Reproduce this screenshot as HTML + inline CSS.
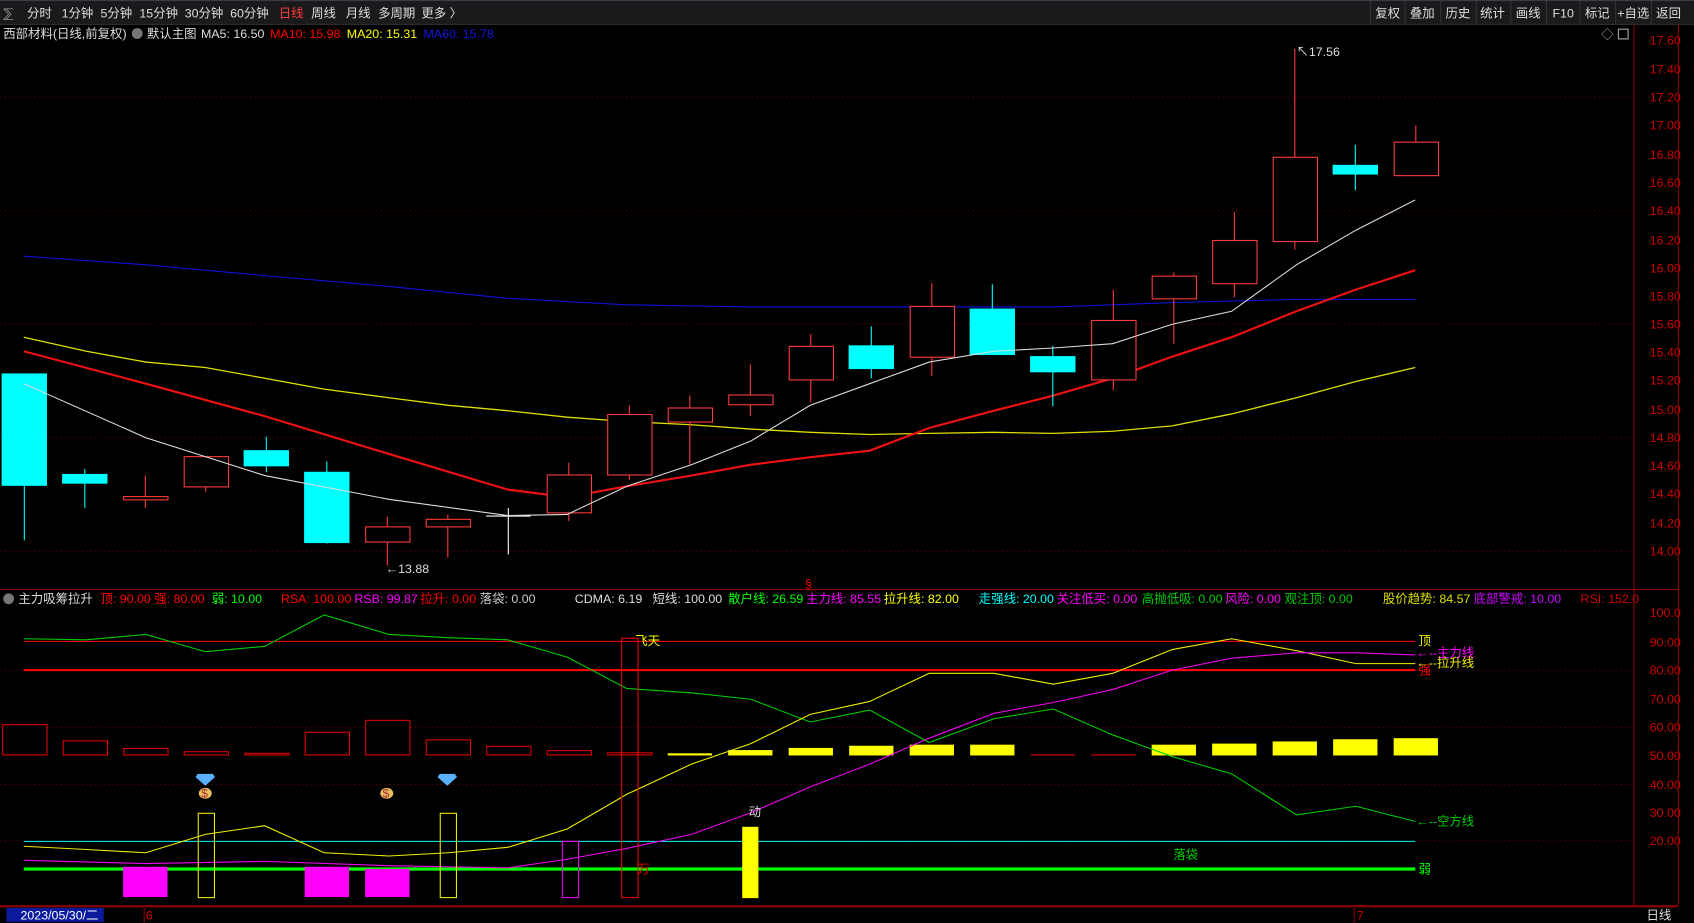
<!DOCTYPE html>
<html><head><meta charset="utf-8"><style>
html,body{margin:0;padding:0;background:#000;overflow:hidden}
svg{display:block}
text{font-family:"Liberation Sans","Noto Sans CJK SC",sans-serif;font-size:11.5px}
</style></head><body>
<svg width="1694" height="923" viewBox="0 0 1568 854" preserveAspectRatio="none">
<rect width="1568" height="854" fill="#000"/>
<!-- top toolbar -->
<rect x="0" y="0" width="1568" height="22" fill="#1a1a1c"/>
<line x1="0" y1="0.5" x2="1568" y2="0.5" stroke="#3a3d44"/>
<line x1="0" y1="22.5" x2="1568" y2="22.5" stroke="#333"/>
<g fill="#ddd">
<text x="3" y="16" fill="#aaa">⅀</text>
<text x="25" y="16">分时</text><text x="57" y="16">1分钟</text><text x="93" y="16">5分钟</text><text x="129" y="16">15分钟</text><text x="171" y="16">30分钟</text><text x="213" y="16">60分钟</text>
<text x="258" y="16" fill="#ff3b3b">日线</text><text x="288" y="16">周线</text><text x="320" y="16">月线</text><text x="350" y="16">多周期</text><text x="390" y="16">更多 〉</text>
<text x="1273" y="16">复权</text><text x="1305" y="16">叠加</text><text x="1338" y="16">历史</text><text x="1370" y="16">统计</text><text x="1403" y="16">画线</text><text x="1437" y="16">F10</text><text x="1467" y="16">标记</text><text x="1497" y="16">+自选</text><text x="1533" y="16">返回</text>
</g>
<g stroke="#333"><line x1="1268.5" y1="1" x2="1268.5" y2="22"/><line x1="1300.5" y1="1" x2="1300.5" y2="22"/><line x1="1333.5" y1="1" x2="1333.5" y2="22"/><line x1="1366.5" y1="1" x2="1366.5" y2="22"/><line x1="1398.5" y1="1" x2="1398.5" y2="22"/><line x1="1431.5" y1="1" x2="1431.5" y2="22"/><line x1="1462.5" y1="1" x2="1462.5" y2="22"/><line x1="1495.5" y1="1" x2="1495.5" y2="22"/><line x1="1528.5" y1="1" x2="1528.5" y2="22"/></g>
<!-- legend -->
<text x="3" y="35" fill="#ddd">西部材料(日线,前复权)</text>
<circle cx="127" cy="31" r="5" fill="#777"/>
<text x="136" y="35" fill="#ddd">默认主图</text>
<text x="186" y="35" fill="#ddd">MA5: 16.50</text>
<text x="250" y="35" fill="#f00">MA10: 15.98</text>
<text x="321" y="35" fill="#ff0">MA20: 15.31</text>
<text x="392" y="35" fill="#1515dd">MA60: 15.78</text>
<text x="1482" y="36" fill="#aaa">◇</text>
<rect x="1498" y="27" width="9" height="9" fill="none" stroke="#aaa"/>
<!-- right axis -->
<line x1="1512.5" y1="23" x2="1512.5" y2="838" stroke="#800"/>
<line x1="1553.5" y1="23" x2="1553.5" y2="838" stroke="#800"/>
<g fill="#c00" font-size="11">
<text x="1527" y="41">17.60</text><text x="1527" y="68">17.40</text><text x="1527" y="94">17.20</text><text x="1527" y="120">17.00</text><text x="1527" y="147">16.80</text><text x="1527" y="173">16.60</text><text x="1527" y="199">16.40</text><text x="1527" y="252">16.00</text><text x="1527" y="278">15.80</text><text x="1527" y="304">15.60</text><text x="1527" y="330">15.40</text><text x="1527" y="356">15.20</text><text x="1527" y="383">15.00</text><text x="1527" y="409">14.80</text><text x="1527" y="435">14.60</text><text x="1527" y="461">14.40</text><text x="1527" y="488">14.20</text><text x="1527" y="514">14.00</text><text x="1527" y="226">16.20</text>
<text x="1527" y="571">100.0</text><text x="1527" y="598">90.00</text><text x="1527" y="624">80.00</text><text x="1527" y="651">70.00</text><text x="1527" y="677">60.00</text><text x="1527" y="703">50.00</text><text x="1527" y="730">40.00</text><text x="1527" y="756">30.00</text><text x="1527" y="782">20.00</text>
</g>
<g stroke="#600" stroke-dasharray="1,3">
<line x1="0" y1="90" x2="1512" y2="90"/><line x1="0" y1="195" x2="1512" y2="195"/><line x1="0" y1="300" x2="1512" y2="300"/><line x1="0" y1="405" x2="1512" y2="405"/><line x1="0" y1="510" x2="1512" y2="510"/>
<line x1="0" y1="620" x2="1512" y2="620"/><line x1="0" y1="673" x2="1512" y2="673"/><line x1="0" y1="726" x2="1512" y2="726"/><line x1="0" y1="778" x2="1512" y2="778"/>
</g>
<!-- separator -->
<line x1="0" y1="545.5" x2="1553" y2="545.5" stroke="#800"/>
<text x="745" y="544" fill="#f00" font-size="11">§</text>
<!-- MA lines -->
<polyline fill="none" stroke="#1010dd" stroke-width="1" points="22,237 135,245 245,255 360,265 470,276 580,282 695,284 860,284 975,284 1085,280 1200,277 1310,277"/>
<polyline fill="none" stroke="#dddd00" stroke-width="1.2" points="22,312 80,325 135,335 190,340 245,350 300,360 360,368 415,375 470,380 525,386 580,390 640,393 695,397 750,400 805,402 860,401 920,400 975,401 1030,399 1085,394 1140,383 1200,368 1255,353 1310,340"/>
<polyline fill="none" stroke="#ee1111" stroke-width="2" points="22,325 135,355 245,385 360,420 470,453 525,460 580,450 640,440 695,430 750,423 805,417 860,396 920,380 975,366 1030,350 1085,330 1140,312 1200,288 1255,268 1310,250"/>
<!-- candles -->
<g stroke="#ff3b3b" fill="#000">
<line x1="134.5" y1="440" x2="134.5" y2="470"/><rect x="114.5" y="459.5" width="41" height="3"/>
<line x1="190.5" y1="422" x2="190.5" y2="455"/><rect x="170.5" y="422.5" width="41" height="28"/>
<line x1="358.5" y1="478" x2="358.5" y2="523"/><rect x="338.5" y="487.5" width="41" height="14"/>
<line x1="414.5" y1="476" x2="414.5" y2="516"/><rect x="394.5" y="480.5" width="41" height="7"/>
<line x1="526.5" y1="428" x2="526.5" y2="482"/><rect x="506.5" y="439.5" width="41" height="35"/>
<line x1="582.5" y1="375" x2="582.5" y2="444"/><rect x="562.5" y="383.5" width="41" height="56"/>
<line x1="638.5" y1="366" x2="638.5" y2="430"/><rect x="618.5" y="377.5" width="41" height="13"/>
<line x1="694.5" y1="337" x2="694.5" y2="385"/><rect x="674.5" y="365.5" width="41" height="9"/>
<line x1="750.5" y1="309" x2="750.5" y2="372"/><rect x="730.5" y="320.5" width="41" height="31"/>
<line x1="862.5" y1="262" x2="862.5" y2="348"/><rect x="842.5" y="283.5" width="41" height="47"/>
<line x1="1030.5" y1="268" x2="1030.5" y2="361"/><rect x="1010.5" y="296.5" width="41" height="55"/>
<line x1="1086.5" y1="252" x2="1086.5" y2="318"/><rect x="1066.5" y="255.5" width="41" height="21"/>
<line x1="1142.5" y1="196" x2="1142.5" y2="275"/><rect x="1122.5" y="222.5" width="41" height="40"/>
<line x1="1198.5" y1="45" x2="1198.5" y2="231"/><rect x="1178.5" y="145.5" width="41" height="78"/>
<line x1="1310.5" y1="116" x2="1310.5" y2="162"/><rect x="1290.5" y="131.5" width="41" height="31"/>
</g>
<g stroke="#00ffff" fill="#00ffff">
<line x1="22.5" y1="346" x2="22.5" y2="500"/><rect x="2" y="346" width="41" height="103"/>
<line x1="78.5" y1="434" x2="78.5" y2="470"/><rect x="58" y="439" width="41" height="8"/>
<line x1="246.5" y1="404" x2="246.5" y2="437"/><rect x="226" y="417" width="41" height="14"/>
<line x1="302.5" y1="427" x2="302.5" y2="503"/><rect x="282" y="437" width="41" height="65"/>
<line x1="806.5" y1="302" x2="806.5" y2="350"/><rect x="786" y="320" width="41" height="21"/>
<line x1="918.5" y1="263" x2="918.5" y2="328"/><rect x="898" y="286" width="41" height="42"/>
<line x1="974.5" y1="320" x2="974.5" y2="376"/><rect x="954" y="330" width="41" height="14"/>
<line x1="1254.5" y1="134" x2="1254.5" y2="176"/><rect x="1234" y="153" width="41" height="8"/>
</g>
<line x1="470.5" y1="470" x2="470.5" y2="513" stroke="#fff"/><line x1="450" y1="477.5" x2="491" y2="477.5" stroke="#fff"/>
<polyline fill="none" stroke="#ddd" stroke-width="1" points="22,355 135,405 245,440 360,462 470,477 525,476 580,450 640,430 695,408 750,375 805,355 860,335 920,325 975,322 1030,318 1085,300 1140,288 1200,245 1255,213 1310,185"/>
<text x="1200" y="52" fill="#ddd">↖17.56</text>
<text x="357" y="530" fill="#ddd">←13.88</text>
<!-- indicator legend -->
<circle cx="8" cy="554" r="5" fill="#777"/>
<g font-size="11.5">
<text x="17" y="558" fill="#ddd">主力吸筹拉升</text>
<text x="93" y="558" fill="#f00">顶: 90.00 强: 80.00</text><text x="196" y="558" fill="#0f0">弱: 10.00</text>
<text x="260" y="558" fill="#f00">RSA: 100.00</text><text x="328" y="558" fill="#f0f">RSB: 99.87</text><text x="389" y="558" fill="#f00">拉升: 0.00</text><text x="444" y="558" fill="#ccc">落袋: 0.00</text>
<text x="532" y="558" fill="#ddd">CDMA: 6.19</text><text x="604" y="558" fill="#ddd">短线: 100.00</text><text x="674" y="558" fill="#0f0">散户线: 26.59</text><text x="746" y="558" fill="#f0f">主力线: 85.55</text><text x="818" y="558" fill="#ff0">拉升线: 82.00</text>
<text x="906" y="558" fill="#0ff">走强线: 20.00</text><text x="978" y="558" fill="#f0f">关注低买: 0.00</text><text x="1057" y="558" fill="#0c0">高抛低吸: 0.00</text><text x="1134" y="558" fill="#f0f">风险: 0.00</text><text x="1189" y="558" fill="#0c0">观注顶: 0.00</text>
<text x="1280" y="558" fill="#dd0">股价趋势: 84.57</text><text x="1364" y="558" fill="#c0f">底部警戒: 10.00</text><text x="1463" y="558" fill="#c00">RSI: 152.0</text>
</g>
<!-- indicator -->
<line x1="22" y1="593.5" x2="1310" y2="593.5" stroke="#e00"/>
<line x1="22" y1="620" x2="1310" y2="620" stroke="#f00" stroke-width="2"/>
<line x1="22" y1="778.5" x2="1310" y2="778.5" stroke="#0dd"/>
<line x1="22" y1="804" x2="1310" y2="804" stroke="#0f0" stroke-width="3"/>
<g fill="#000" stroke="#d00">
<rect x="2.5" y="670.5" width="41" height="28"/><rect x="58.5" y="685.5" width="41" height="13"/><rect x="114.5" y="692.5" width="41" height="6"/><rect x="170.5" y="695.5" width="41" height="3"/><rect x="226.5" y="697" width="41" height="1.5"/><rect x="282.5" y="677.5" width="41" height="21"/><rect x="338.5" y="666.5" width="41" height="32"/><rect x="394.5" y="684.5" width="41" height="14"/><rect x="450.5" y="690.5" width="41" height="8"/><rect x="506.5" y="694.5" width="41" height="4"/><rect x="562.5" y="696.5" width="41" height="2"/>
<line x1="954" y1="698.5" x2="995" y2="698.5"/><line x1="1010" y1="698.5" x2="1051" y2="698.5"/>
</g>
<g fill="#ff0">
<rect x="618" y="697" width="41" height="2"/><rect x="674" y="694" width="41" height="5"/><rect x="730" y="692" width="41" height="7"/><rect x="786" y="690" width="41" height="9"/><rect x="842" y="689" width="41" height="10"/><rect x="898" y="689" width="41" height="10"/><rect x="1066" y="689" width="41" height="10"/><rect x="1122" y="688" width="41" height="11"/><rect x="1178" y="686" width="41" height="13"/><rect x="1234" y="684" width="41" height="15"/><rect x="1290" y="683" width="41" height="16"/>
</g>
<polyline fill="none" stroke="#0c0" points="22,591 80,592 135,587 190,603 245,598 300,569 360,587 415,590 470,592 525,608 580,637 640,641 695,647 750,668 805,657 860,687 920,665 975,656 1030,680 1085,700 1140,716 1200,754 1255,746 1310,760"/>
<polyline fill="none" stroke="#ee0" points="22,783 80,786 135,789 190,772 245,764 300,789 360,792 415,789 470,784 525,767 580,735 640,707 695,688 750,661 805,649 860,623 920,623 975,633 1030,623 1085,601 1140,591 1200,602 1255,614 1310,614"/>
<polyline fill="none" stroke="#e0e" points="22,796 135,799 245,797 360,801 470,803 525,795 580,785 640,772 695,752 750,728 805,707 860,683 920,660 975,650 1030,638 1085,620 1140,609 1200,604 1255,604 1310,606"/>
<g fill="#f0f"><rect x="114" y="802" width="41" height="28"/><rect x="282" y="802" width="41" height="28"/><rect x="338" y="804" width="41" height="26"/></g>
<g fill="none" stroke="#ee0"><rect x="183.5" y="752.5" width="15" height="78"/><rect x="407.5" y="752.5" width="15" height="78"/></g>
<rect x="520.5" y="778.5" width="15" height="52" fill="none" stroke="#e0e"/>
<rect x="575.5" y="590.5" width="15" height="240" fill="none" stroke="#e00"/>
<rect x="687" y="765" width="15" height="66" fill="#ff0"/>
<text x="588" y="597" fill="#ff0" font-size="11">飞天</text>
<text x="590" y="808" fill="#e00" font-size="10">万</text>
<text x="693" y="755" fill="#ddd" font-size="11">动</text>
<text x="1086" y="795" fill="#0c0" font-size="11">落袋</text>
<g font-size="11"><text x="1313" y="597" fill="#ee0">顶</text><text x="1313" y="624" fill="#f00">强</text><text x="1313" y="808" fill="#0f0">弱</text>
<text x="1311" y="608" fill="#f0f">←--主力线</text><text x="1311" y="617" fill="#ee0">←--拉升线</text><text x="1311" y="764" fill="#0c0">←--空方线</text></g>
<!-- icons -->
<path d="M183,716 L197,716 L199,719 L190,727 L181,719 Z" fill="#5ab0ff"/>
<path d="M407,716 L421,716 L423,719 L414,727 L405,719 Z" fill="#5ab0ff"/>
<ellipse cx="190" cy="734" rx="6" ry="5" fill="#e8c060"/><text x="186" y="738" fill="#a33" font-size="8">$</text>
<ellipse cx="358" cy="734" rx="6" ry="5" fill="#e8c060"/><text x="354" y="738" fill="#a33" font-size="8">$</text>
<!-- bottom -->
<line x1="0" y1="838.5" x2="1553" y2="838.5" stroke="#800" stroke-width="2"/>
<rect x="0" y="840" width="1568" height="14" fill="#000"/>
<rect x="6" y="840" width="90" height="13" fill="#0a1a9c"/>
<text x="19" y="851" fill="#fff" font-size="11">2023/05/30/二</text>
<line x1="133.5" y1="840" x2="133.5" y2="854" stroke="#800"/><text x="135" y="851" fill="#c00" font-size="10">6</text>
<line x1="1253.5" y1="840" x2="1253.5" y2="854" stroke="#800"/><text x="1256" y="851" fill="#c00" font-size="10">7</text>
<text x="1524" y="851" fill="#ddd" font-size="11">日线</text>
</svg>
</body></html>
